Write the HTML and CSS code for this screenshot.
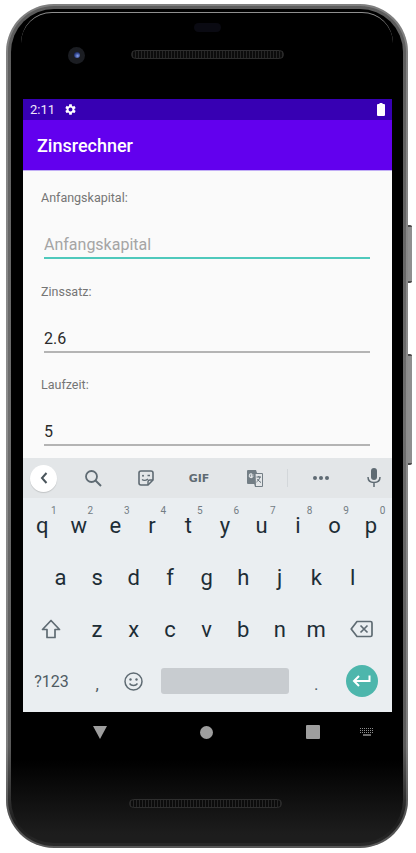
FILE: index.html
```html
<!DOCTYPE html>
<html>
<head>
    <meta charset="UTF-8">
    <title>Zinsrechner</title>
    <link rel="stylesheet" href="styles.css">
</head>
<body>
<div class="device">
    <div class="side-key side-key-power"></div>
    <div class="side-key side-key-volume"></div>
    <div class="device-body">
        <div class="top-bezel">
            <div class="sensor"></div>
            <div class="camera"><div class="lens"></div></div>
            <div class="speaker"></div>
        </div>

        <div class="screen">
            <div class="status-bar">
                <span class="time">2:11</span>
                <svg class="gear" viewBox="0 0 24 24"><path d="M19.14 12.94c.04-.3.06-.61.06-.94 0-.32-.02-.64-.07-.94l2.03-1.58c.18-.14.23-.41.12-.61l-1.92-3.32c-.12-.22-.37-.29-.59-.22l-2.39.96c-.5-.38-1.03-.7-1.62-.94l-.36-2.54c-.04-.24-.24-.41-.48-.41h-3.84c-.24 0-.43.17-.47.41l-.36 2.54c-.59.24-1.13.57-1.62.94l-2.39-.96c-.22-.08-.47 0-.59.22L2.74 8.87c-.12.21-.08.47.12.61l2.03 1.58c-.05.3-.09.63-.09.94s.02.64.07.94l-2.03 1.58c-.18.14-.23.41-.12.61l1.92 3.32c.12.22.37.29.59.22l2.39-.96c.5.38 1.03.7 1.62.94l.36 2.54c.05.24.24.41.48.41h3.84c.24 0 .44-.17.47-.41l.36-2.54c.59-.24 1.13-.56 1.62-.94l2.39.96c.22.08.47 0 .59-.22l1.92-3.32c.12-.22.07-.47-.12-.61l-2.01-1.58zM12 15.6c-1.98 0-3.6-1.62-3.6-3.6s1.62-3.6 3.6-3.6 3.6 1.62 3.6 3.6-1.62 3.6-3.6 3.6z"/></svg>
                <svg class="battery" viewBox="0 0 8 13"><path d="M2.500 0h3v1H7a1 1 0 0 1 1 1v10a1 1 0 0 1-1 1H1a1 1 0 0 1-1-1V2a1 1 0 0 1 1-1h1.500z"/></svg>
            </div>
            <div class="app-bar">Zinsrechner</div>

            <div class="content">
                <label class="field-label">Anfangskapital:</label>
                <input class="field-input field-input-active" placeholder="Anfangskapital">
                <label class="field-label">Zinssatz:</label>
                <input class="field-input" value="2.6">
                <label class="field-label">Laufzeit:</label>
                <input class="field-input" value="5">
            </div>

            <div class="toolbar">
                <div class="back-btn">
                    <svg viewBox="0 0 10 14"><path d="M7.500 2L3 7l4.500 5" fill="none" stroke="#4a555c" stroke-width="2"/></svg>
                </div>
                <svg class="tool tool-search" viewBox="0 0 18 18"><circle cx="7.500" cy="7.500" r="5.500" fill="none" stroke-width="1.800"/><path d="M11.500 11.500L17 17" fill="none" stroke-width="2"/></svg>
                <svg class="tool tool-sticker" viewBox="0 0 16 16"><path d="M3 1h10a2 2 0 0 1 2 2v7l-5 5H3a2 2 0 0 1-2-2V3a2 2 0 0 1 2-2z" fill="none" stroke-width="1.600"/><path d="M15 10h-3a2 2 0 0 0-2 2v3" fill="none" stroke-width="1.400"/><circle cx="5" cy="5.800" r="1" class="fill"/><path d="M9.500 5.500h2.500M4 9.500c1.500 1.300 3.500 1.300 6-.5" fill="none" stroke-width="1.300"/></svg>
                <span class="gif">GIF</span>
                <svg class="tool tool-translate" viewBox="0 0 16 17"><path d="M1 0h8l1 3h5a1 1 0 0 1 1 1v12a1 1 0 0 1-1 1H8l-.8-3H1a1 1 0 0 1-1-1V1a1 1 0 0 1 1-1z" class="fill" opacity="0.85"/><path d="M8.600 4h6.400v12H9z" fill="#e3e6e8" stroke="none"/><path d="M6.500 5H4.300v1.800h1.400A1.900 1.900 0 1 1 5 4" fill="none" stroke="#e3e6e8" stroke-width="1.100"/><path d="M9.500 7h4.500M11.800 6v1M13 7c-.5 2-2 4-3.500 5M10.500 9c.8 1.500 1.800 2.500 3.500 3.500" fill="none" stroke-width="1"/></svg>
                <div class="tool-divider"></div>
                <div class="dots"><i></i><i></i><i></i></div>
                <svg class="tool tool-mic" viewBox="0 0 14 20"><rect x="4" y="0" width="6" height="12" rx="3" class="fill" stroke="none"/><path d="M1 9c0 3.500 2.500 5.500 6 5.500s6-2 6-5.500M7 14.500V19" fill="none" stroke-width="1.500"/></svg>
            </div>

            <div class="keyboard">
                <div class="key-row">
                    <div class="key"><sup>1</sup>q</div>
                    <div class="key"><sup>2</sup>w</div>
                    <div class="key"><sup>3</sup>e</div>
                    <div class="key"><sup>4</sup>r</div>
                    <div class="key"><sup>5</sup>t</div>
                    <div class="key"><sup>6</sup>y</div>
                    <div class="key"><sup>7</sup>u</div>
                    <div class="key"><sup>8</sup>i</div>
                    <div class="key"><sup>9</sup>o</div>
                    <div class="key"><sup>0</sup>p</div>
                </div>
                <div class="key-row">
                    <div class="key key-first">a</div>
                    <div class="key">s</div>
                    <div class="key">d</div>
                    <div class="key">f</div>
                    <div class="key">g</div>
                    <div class="key">h</div>
                    <div class="key">j</div>
                    <div class="key">k</div>
                    <div class="key">l</div>
                </div>
                <div class="key-row">
                    <div class="key key-wide">
                        <svg class="key-icon" width="20" height="20" viewBox="0 0 20 20"><path d="M10 1.500L1.500 10.500H6V18.500H14V10.500H18.500z" fill="none" stroke-width="1.700" stroke-linejoin="round"/></svg>
                    </div>
                    <div class="key">z</div>
                    <div class="key">x</div>
                    <div class="key">c</div>
                    <div class="key">v</div>
                    <div class="key">b</div>
                    <div class="key">n</div>
                    <div class="key">m</div>
                    <div class="key key-wide">
                        <svg class="key-icon" width="23" height="18" viewBox="0 0 23 18"><path d="M7 1.500H20.500a1.500 1.500 0 0 1 1.500 1.500v12a1.500 1.500 0 0 1-1.500 1.500H7L1.200 9z" fill="none" stroke-width="1.700" stroke-linejoin="round"/><path d="M10.500 5.500l7 7M17.500 5.500l-7 7" fill="none" stroke-width="1.700"/></svg>
                    </div>
                </div>
                <div class="key-row">
                    <div class="key key-wide key-symbols">?123</div>
                    <div class="key key-small">,</div>
                    <div class="key">
                        <svg class="key-icon" width="19" height="19" viewBox="0 0 19 19"><circle cx="9.500" cy="9.500" r="8.500" fill="none" stroke-width="1.500"/><circle cx="6.500" cy="7.500" r="1.200" class="fill"/><circle cx="12.500" cy="7.500" r="1.200" class="fill"/><path d="M5.500 11.500c1.800 2.600 6.200 2.600 8 0" fill="none" stroke-width="1.400"/></svg>
                    </div>
                    <div class="key key-space"><div class="space-bar"></div></div>
                    <div class="key key-small">.</div>
                    <div class="key key-wide">
                        <div class="enter-btn">
                            <svg width="19" height="14" viewBox="0 0 19 14"><path d="M17.500 1.500V7H2.500M7 2L2 7l5 5" fill="none" stroke="#fff" stroke-width="2"/></svg>
                        </div>
                    </div>
                </div>
            </div>
        </div>

        <div class="nav-bar">
            <div class="nav-back"></div>
            <div class="nav-home"></div>
            <div class="nav-recent"></div>
            <svg class="nav-keyboard" viewBox="0 0 14 8"><path d="M0 .5h14M0 2.500h14M0 4.500h14" stroke="#8e8e8e" stroke-dasharray="1 1"/><path d="M3 7h8" stroke="#8e8e8e" stroke-width="1.500"/></svg>
        </div>

        <div class="bottom-bezel">
            <div class="speaker speaker-bottom"></div>
        </div>
    </div>
</div>
</body>
</html>
```

FILE: styles.css
```css
html, body {
    margin: 0;
    padding: 0;
    background-color: #fff;
    font-family: Roboto, "Liberation Sans", sans-serif;
}

.device {
    position: relative;
    box-sizing: border-box;
    width: 402px;
    height: 844px;
    margin: 4px 0 0 6px;
    padding: 5px;
    border-radius: 48px;
    background: linear-gradient(#5c5c5c 0, #6e6e6e 50%, #5a5a5a 88%, #1e1e1e 97%, #2a2a2a 100%);
    box-shadow: inset 0 0 0 2px rgba(255, 255, 255, 0.22);
}

.side-key {
    position: absolute;
    right: -4px;
    width: 4px;
    background-color: #8f8f8f;
    border-radius: 0 2px 2px 0;
    border-top: 2px solid #4a4a4a;
    border-bottom: 2px solid #4a4a4a;
    box-sizing: border-box;
}

.side-key-power {
    top: 221px;
    height: 58px;
}

.side-key-volume {
    top: 350px;
    height: 111px;
}

.device-body {
    position: relative;
    display: flex;
    flex-direction: column;
    align-items: stretch;
    height: 100%;
    box-sizing: border-box;
    padding: 0 11px 0 12px;
    border-radius: 43px;
    background: linear-gradient(#000 0, #000 90%, #1d1d1d 99%);
}

/* thin light arc along the top of the glass */
.device-body::before {
    content: "";
    position: absolute;
    top: 3px;
    left: 10px;
    right: 10px;
    height: 30px;
    border-top: 1px solid #8f8f8f;
    border-radius: 40px 40px 0 0;
}

.top-bezel {
    position: relative;
    display: flex;
    align-items: center;
    flex-shrink: 0;
    height: 90px;
    padding-top: 2px;
    box-sizing: border-box;
}

.sensor {
    position: absolute;
    top: 14px;
    left: 171px;
    width: 27px;
    height: 9px;
    border-radius: 5px;
    background-color: #0a0a12;
}

.camera {
    display: flex;
    align-items: center;
    justify-content: center;
    width: 17px;
    height: 17px;
    margin-left: 45px;
    border-radius: 50%;
    background-color: #1b1d22;
}

.lens {
    width: 6px;
    height: 6px;
    border-radius: 50%;
    background: radial-gradient(circle at 60% 65%, #8aa4ee 0, #2c3f86 55%, #0a0d20 100%);
}

.speaker {
    width: 153px;
    height: 9px;
    margin-left: 46px;
    margin-bottom: 2px;
    box-sizing: border-box;
    border: 1px solid #2e2e2e;
    border-radius: 5px;
    background: repeating-linear-gradient(90deg, #262626 0, #262626 1px, #0c0c0c 1px, #0c0c0c 3px);
}

.screen {
    display: flex;
    flex-direction: column;
    flex-shrink: 0;
    width: 369px;
    height: 613px;
}

.status-bar {
    display: flex;
    align-items: center;
    height: 21px;
    padding: 0 7px 0 7px;
    background-color: #3700b3;
    color: #efe8fb;
    font-size: 13px;
}

.time {
    width: 24px;
}

.gear {
    width: 13px;
    height: 13px;
    margin-left: 10px;
    fill: #fff;
}

.battery {
    width: 8px;
    height: 13px;
    margin-left: auto;
    fill: #fff;
}

.app-bar {
    display: flex;
    align-items: center;
    height: 50px;
    padding-left: 14px;
    background-color: #6200ee;
    color: #fff;
    font-size: 18px;
    font-weight: 500;
}

.content {
    display: flex;
    flex-direction: column;
    align-items: flex-start;
    flex: 1;
    padding: 20px 0 0 18px;
    background-color: #fafafa;
    border-top: 1px solid #c2aef5;
    box-sizing: border-box;
    overflow: hidden;
}

.field-label {
    height: 14px;
    line-height: 14px;
    font-size: 12.500px;
    color: #757575;
}

.field-input {
    box-sizing: border-box;
    width: 326px;
    height: 24px;
    margin: 30px 0 25.500px 3px;
    padding: 0 0 3px 0;
    border: 0;
    border-bottom: 2px solid #b4b4b4;
    background: transparent;
    outline: none;
    font-family: inherit;
    font-size: 16px;
    color: #2a2a2a;
}

.field-input::placeholder {
    color: #a5a5a5;
}

.field-input-active {
    border-bottom-color: #4fc9bc;
}

.toolbar {
    display: flex;
    align-items: center;
    flex-shrink: 0;
    height: 40px;
    background-color: #e3e6e8;
}

.back-btn {
    display: flex;
    align-items: center;
    justify-content: center;
    width: 27px;
    height: 27px;
    margin-left: 7px;
    border-radius: 50%;
    background-color: #fff;
    box-shadow: 0 1px 1px rgba(0, 0, 0, 0.15);
}

.back-btn svg {
    width: 10px;
    height: 14px;
}

.tool {
    stroke: #5f6b73;
    fill: none;
}

.tool .fill,
.key-icon .fill {
    fill: #5f6b73;
    stroke: none;
}

.tool-search {
    width: 18px;
    height: 18px;
    margin-left: 27px;
}

.tool-sticker {
    width: 16px;
    height: 16px;
    margin-left: 36px;
}

.gif {
    width: 22px;
    margin-left: 34px;
    font-family: "DejaVu Sans", sans-serif;
    font-size: 11px;
    font-weight: 700;
    color: #5f6b73;
    text-align: center;
}

.tool-translate {
    width: 16px;
    height: 17px;
    margin-left: 37px;
}

.tool-divider {
    width: 1px;
    height: 18px;
    margin-left: 24px;
    background-color: #d3d7da;
}

.dots {
    display: flex;
    gap: 2px;
    margin-left: 25px;
}

.dots i {
    width: 4px;
    height: 4px;
    border-radius: 50%;
    background-color: #5f6b73;
}

.tool-mic {
    width: 14px;
    height: 20px;
    margin-left: 38px;
}

.keyboard {
    display: flex;
    flex-direction: column;
    flex: none;
    height: 214px;
    box-sizing: border-box;
    padding: 1px 0 0 1px;
    background-color: #eaeef1;
}

.key-row {
    display: grid;
    grid-template-columns: repeat(20, 18.280px);
    height: 52px;
}

.key {
    position: relative;
    grid-column: span 2;
    display: flex;
    align-items: center;
    justify-content: center;
    font-size: 22px;
    color: #1d2d36;
}

.key sup {
    position: absolute;
    top: 7px;
    right: 4px;
    font-size: 10px;
    line-height: 10px;
    color: #737d84;
}

.key-first {
    grid-column: 2 / span 2;
}

.key-wide {
    grid-column: span 3;
}

.key-symbols {
    font-size: 16px;
    color: #4f5b63;
}

.key-small {
    padding-top: 6px;
    box-sizing: border-box;
    font-size: 17px;
    color: #4f5b63;
}

.key-icon {
    stroke: #5f6b73;
}

.key-space {
    grid-column: span 8;
}

.space-bar {
    width: 128px;
    height: 26px;
    border-radius: 3px;
    background-color: #c8ccd0;
}

.enter-btn {
    display: flex;
    align-items: center;
    justify-content: center;
    width: 32px;
    height: 32px;
    border-radius: 50%;
    background-color: #4db6ac;
}

.nav-bar {
    display: flex;
    align-items: center;
    flex-shrink: 0;
    height: 40px;
    padding-left: 70px;
}

.nav-back {
    width: 0;
    height: 0;
    border-left: 7.500px solid transparent;
    border-right: 7.500px solid transparent;
    border-top: 13px solid #9e9e9e;
}

.nav-home {
    width: 13px;
    height: 13px;
    margin-left: 93px;
    border-radius: 50%;
    background-color: #9e9e9e;
}

.nav-recent {
    width: 14px;
    height: 14px;
    margin-left: 93px;
    border-radius: 1px;
    background-color: #9e9e9e;
}

.nav-keyboard {
    width: 14px;
    height: 8px;
    margin-left: 40px;
    fill: none;
}

.bottom-bezel {
    flex: 1;
    padding-top: 47px;
    box-sizing: border-box;
}

.speaker-bottom {
    margin-left: 106px;
}
```
